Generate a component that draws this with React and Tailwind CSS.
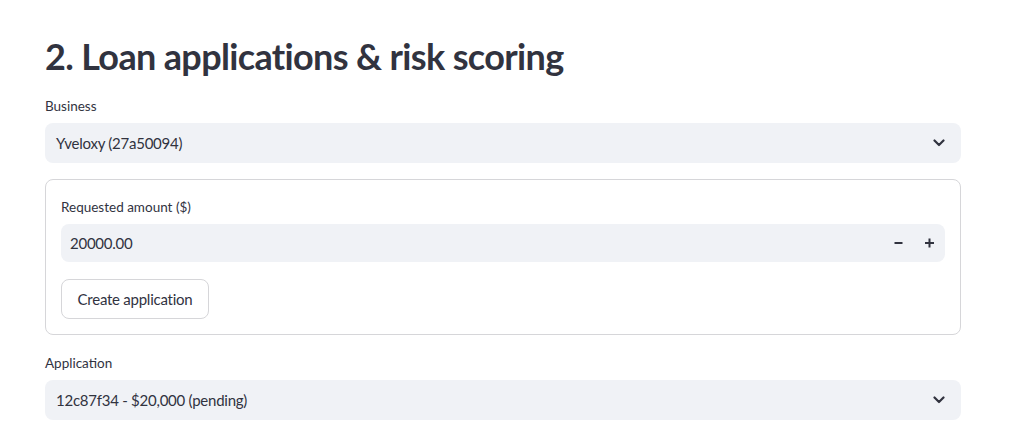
import React from "react";

const font = { fontFamily: "Lato, 'Open Sans', sans-serif" };

function Chevron() {
  return (
    <svg width="12" height="8" viewBox="0 0 12 8" fill="none">
      <path d="M1.5 1.5 L6 6 L10.5 1.5" stroke="#31333f" strokeWidth="2.2" strokeLinecap="round" strokeLinejoin="round" />
    </svg>
  );
}

function SelectBox({ value }) {
  return (
    <div className="flex h-10 items-center justify-between rounded-lg bg-[#f0f2f6] pl-[11px] pr-4 text-[15px] tracking-[-0.25px] text-[#31333f]">
      <span>{value}</span>
      <Chevron />
    </div>
  );
}

function Label({ children }) {
  return <div className="mb-2 text-[13.5px] leading-[18px] text-[#31333f]">{children}</div>;
}

export default function App() {
  return (
    <div className="min-h-screen bg-white" style={font}>
      <div className="w-[916px] pl-[45px] pt-[30px] box-content">
        <h2 className="text-[36px] font-bold leading-[52px] tracking-[-0.65px] text-[#31333f]">
          2. Loan applications &amp; risk scoring
        </h2>

        <div className="mt-[15px]">
          <Label>Business</Label>
          <SelectBox value="Yveloxy (27a50094)" />
        </div>

        <div className="mt-4 rounded-lg border border-[#d6d6d9] px-[15px] pb-[15px] pt-[18px]">
          <Label>Requested amount ($)</Label>
          <div className="flex h-[38px] items-center justify-between rounded-lg bg-[#f0f2f6] pl-[9px] pr-[11px] text-[15px] tracking-[-0.25px] text-[#31333f]">
            <span>20000.00</span>
            <div className="flex items-center gap-[22px]">
              <svg width="9" height="10" viewBox="0 0 9 10">
                <path d="M0.5 5 H8.5" stroke="#31333f" strokeWidth="2" />
              </svg>
              <svg width="9" height="10" viewBox="0 0 9 10">
                <path d="M0 5 H9 M4.5 0.5 V9.5" stroke="#31333f" strokeWidth="2" />
              </svg>
            </div>
          </div>
          <button className="mt-[17px] flex h-10 w-[148px] items-center justify-center rounded-lg border border-[#d6d6d9] bg-white text-[15px] tracking-[-0.25px] text-[#31333f]">
            Create application
          </button>
        </div>

        <div className="mt-[19px]">
          <Label>Application</Label>
          <SelectBox value="12c87f34 - $20,000 (pending)" />
        </div>
      </div>
    </div>
  );
}
